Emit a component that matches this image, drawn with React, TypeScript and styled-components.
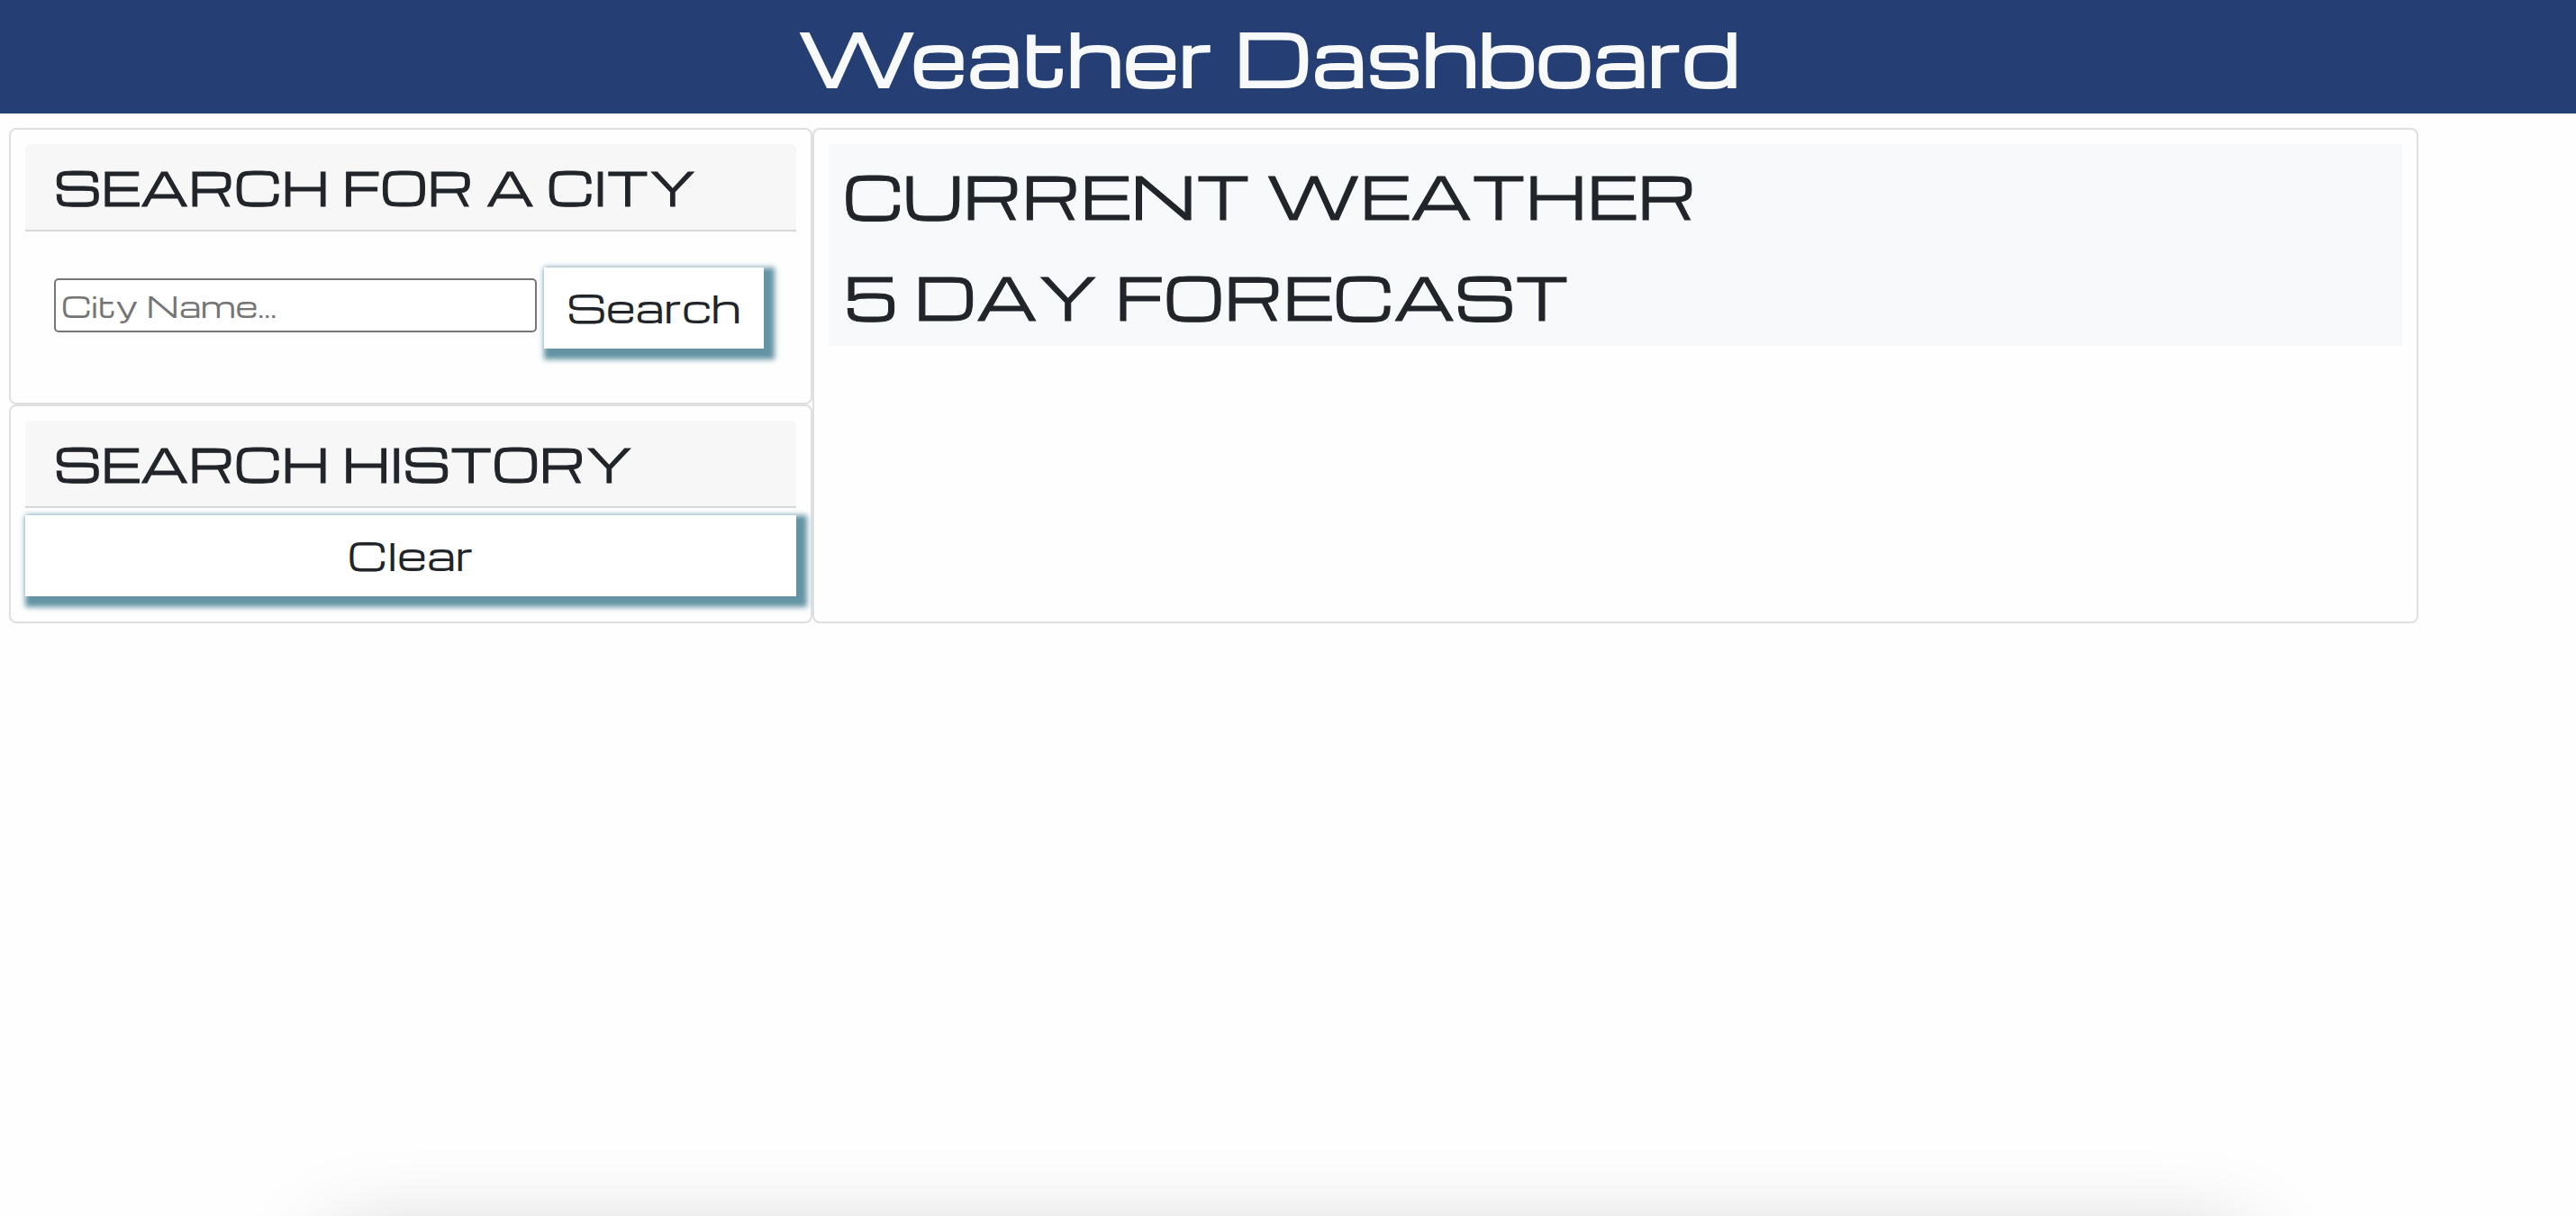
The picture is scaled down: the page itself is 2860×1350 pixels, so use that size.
import React, { useState } from "react";
import styled, { createGlobalStyle } from "styled-components";

const GlobalStyle = createGlobalStyle`
  *, *::before, *::after {
    box-sizing: border-box;
  }
  body {
    margin: 0;
    background: #fefefe;
    color: #212529;
    font-family: Michroma, "DejaVu Sans", sans-serif;
  }
  h1, h2 {
    margin: 0;
    font-weight: 400;
    -webkit-text-stroke: 1px currentColor;
  }
`;

const Banner = styled.header`
  padding: 0 42px 4px 0;
  background: #253e74;
  color: #f8f9fa;
  text-align: center;
`;

const Title = styled.h1`
  font-size: 80px;
  line-height: 122px;
  -webkit-text-stroke-width: 2px;
`;

const Dashboard = styled.main`
  display: grid;
  grid-template-columns: minmax(0, 1fr) minmax(0, 2fr);
  padding: 16px 175px 16px 10px;
`;

const Sidebar = styled.div`
  display: flex;
  flex-direction: column;
`;

const Card = styled.section`
  padding: 16px;
  border: 2px solid #dfdfdf;
  border-radius: 8px;
`;

const CardHeader = styled.div`
  padding: 0 32px 2px;
  background: #f7f7f7;
  border-bottom: 2px solid #d8d8d8;
  border-radius: 6px 6px 0 0;
`;

const CardTitle = styled.h2`
  font-size: 50px;
  line-height: 93px;
  white-space: nowrap;
`;

const SearchForm = styled.form`
  display: flex;
  align-items: center;
  gap: 8px;
  padding: 40px 36px 44px 32px;
`;

const CityInput = styled.input`
  flex: 1;
  min-width: 0;
  height: 60px;
  margin-bottom: 6px;
  padding: 0 6px;
  border: 2px solid #767676;
  border-radius: 5px;
  background: #ffffff;
  color: inherit;
  font-family: inherit;
  font-size: 32px;

  &::placeholder {
    color: #757575;
    opacity: 1;
  }
`;

const Button = styled.button<{ $block?: boolean }>`
  display: block;
  width: ${({ $block }) => ($block ? "100%" : "auto")};
  margin: ${({ $block }) => ($block ? "8px 0 12px" : "0")};
  padding: 0 25px 4px;
  border: 0;
  background: #ffffff;
  box-shadow: 6px 6px 6px 6px #6494a4;
  color: inherit;
  font-family: inherit;
  font-size: 42px;
  line-height: 86px;
  cursor: pointer;
`;

const Weather = styled.div`
  background: #f8f9fb;
`;

const WeatherTitle = styled.h2`
  padding: 0 16px;
  font-size: 64px;
  line-height: 112px;
`;

const BottomShade = styled.div`
  position: fixed;
  top: 100%;
  left: 13%;
  right: 13%;
  height: 200px;
  margin-top: 32px;
  box-shadow: 0 0 100px rgba(0, 0, 0, 0.25);
  pointer-events: none;
`;

export default function App() {
  const [city, setCity] = useState("");

  return (
    <>
      <GlobalStyle />
      <Banner>
        <Title>Weather Dashboard</Title>
      </Banner>
      <Dashboard>
        <Sidebar>
          <Card>
            <CardHeader>
              <CardTitle>
                <label htmlFor="city">SEARCH FOR A CITY</label>
              </CardTitle>
            </CardHeader>
            <SearchForm onSubmit={(event) => event.preventDefault()}>
              <CityInput
                id="city"
                type="text"
                placeholder="City Name..."
                value={city}
                onChange={(event) => setCity(event.target.value)}
              />
              <Button type="submit">Search</Button>
            </SearchForm>
          </Card>
          <Card>
            <CardHeader>
              <CardTitle>SEARCH HISTORY</CardTitle>
            </CardHeader>
            <Button type="button" $block onClick={() => setCity("")}>
              Clear
            </Button>
          </Card>
        </Sidebar>
        <Card>
          <Weather>
            <WeatherTitle>CURRENT WEATHER</WeatherTitle>
            <WeatherTitle>5 DAY FORECAST</WeatherTitle>
          </Weather>
        </Card>
      </Dashboard>
      <BottomShade />
    </>
  );
}
